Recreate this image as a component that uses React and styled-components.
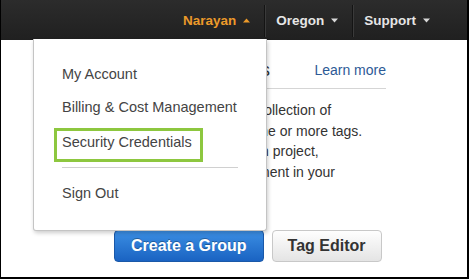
import React from "react";
import styled, { createGlobalStyle } from "styled-components";

const GlobalStyle = createGlobalStyle`
  body {
    margin: 0;
    background: #fff;
    font-family: "Liberation Sans", Arial, sans-serif;
  }
`;

const Frame = styled.div`
  position: relative;
  width: 469px;
  height: 279px;
  box-sizing: border-box;
  border-left: 1px solid #000;
  border-right: 2px solid #000;
  border-bottom: 2px solid #000;
  background: #fff;
  overflow: hidden;
`;

const TopBar = styled.div`
  height: 40px;
  display: flex;
  justify-content: flex-end;
  align-items: stretch;
  padding-right: 23px;
  background: linear-gradient(#2c2c2c, #202020);
`;

const NavItem = styled.div`
  display: flex;
  align-items: center;
  gap: 7px;
  padding: 0 14px 0 11px;
  font-size: 13.5px;
  font-weight: bold;
  color: ${(p) => (p.active ? "#ec9a2a" : "#e6e6e6")};
`;

const Divider = styled.div`
  width: 1px;
  margin: 5px 0 3px;
  background: #141414;
  box-shadow: 1px 0 0 #3a3a3a;
`;

const Caret = ({ up, color }) => (
  <svg width="7" height="5" viewBox="0 0 7 5">
    <path d={up ? "M0 4.5 L3.5 0.5 L7 4.5 Z" : "M0 0.5 L3.5 4.5 L7 0.5 Z"} fill={color} />
  </svg>
);

const Main = styled.div`
  width: 272px;
  margin-left: 113px;
`;

const Header = styled.div`
  display: flex;
  justify-content: space-between;
  align-items: center;
  margin-left: 7px;
  padding: 20px 0 8px;
  border-bottom: 1px solid #d5d5d5;
  line-height: 20px;
`;

const Title = styled.h2`
  margin: 0;
  font-size: 19px;
  font-weight: normal;
  color: #333;
`;

const LearnMore = styled.a`
  font-size: 14px;
  color: #2d5a96;
  text-decoration: none;
`;

const Description = styled.p`
  margin: 11px 0 0 7px;
  font-size: 14px;
  line-height: 20.5px;
  color: #333;
  white-space: nowrap;
`;

const Actions = styled.div`
  display: flex;
  gap: 8px;
  margin-top: 27px;
`;

const Button = styled.button`
  height: 32px;
  padding: 0 ${(p) => (p.primary ? "16px" : "15px")};
  border-radius: 4px;
  font-family: inherit;
  font-size: 16px;
  font-weight: bold;
  border: 1px solid ${(p) => (p.primary ? "#1a58a8" : "#c8c8c8")};
  color: ${(p) => (p.primary ? "#fff" : "#333")};
  background: ${(p) =>
    p.primary
      ? "linear-gradient(#3b8ee3, #1a63c2)"
      : "linear-gradient(#fefefe, #e4e4e4)"};
  text-shadow: ${(p) => (p.primary ? "0 -1px 0 rgba(0,0,0,0.3)" : "none")};
`;

const Menu = styled.div`
  position: absolute;
  top: 39px;
  left: 32px;
  width: 234px;
  box-sizing: border-box;
  padding: 19px 0 20px;
  background: #fff;
  border: 1px solid #c4c4c4;
  border-top: none;
  border-radius: 0 0 3px 3px;
  box-shadow: 1px 2px 4px rgba(0, 0, 0, 0.2);
  display: flex;
  flex-direction: column;
`;

const MenuItem = styled.div`
  height: 33px;
  line-height: 33px;
  padding-left: 28px;
  font-size: 14.5px;
  color: #444;
`;

const Highlight = styled.div`
  align-self: flex-start;
  margin: 4px 0 0 20px;
  padding: 0 8px 6px 5px;
  line-height: 22px;
  border: 3px solid #8dc73f;
  font-size: 14.5px;
  color: #444;
`;

const Separator = styled.div`
  height: 1px;
  margin: 5px 0 9px 28px;
  width: 176px;
  background: #d0d0d0;
`;

export default function App() {
  return (
    <>
      <GlobalStyle />
      <Frame>
        <TopBar>
          <NavItem active>
            Narayan <Caret up color="#ec9a2a" />
          </NavItem>
          <Divider />
          <NavItem>
            Oregon <Caret color="#d8d8d8" />
          </NavItem>
          <Divider />
          <NavItem>
            Support <Caret color="#d8d8d8" />
          </NavItem>
        </TopBar>
        <Main>
          <Header>
            <Title>Resource Groups</Title>
            <LearnMore href="#">Learn more</LearnMore>
          </Header>
          <Description>
            A resource group is a collection of
            <br />
            resources that share one or more tags.
            <br />
            Create a group for each project,
            <br />
            application, or environment in your
            <br />
            account.
          </Description>
          <Actions>
            <Button primary>Create a Group</Button>
            <Button>Tag Editor</Button>
          </Actions>
        </Main>
        <Menu>
          <MenuItem>My Account</MenuItem>
          <MenuItem>Billing &amp; Cost Management</MenuItem>
          <Highlight>Security Credentials</Highlight>
          <Separator />
          <MenuItem>Sign Out</MenuItem>
        </Menu>
      </Frame>
    </>
  );
}
